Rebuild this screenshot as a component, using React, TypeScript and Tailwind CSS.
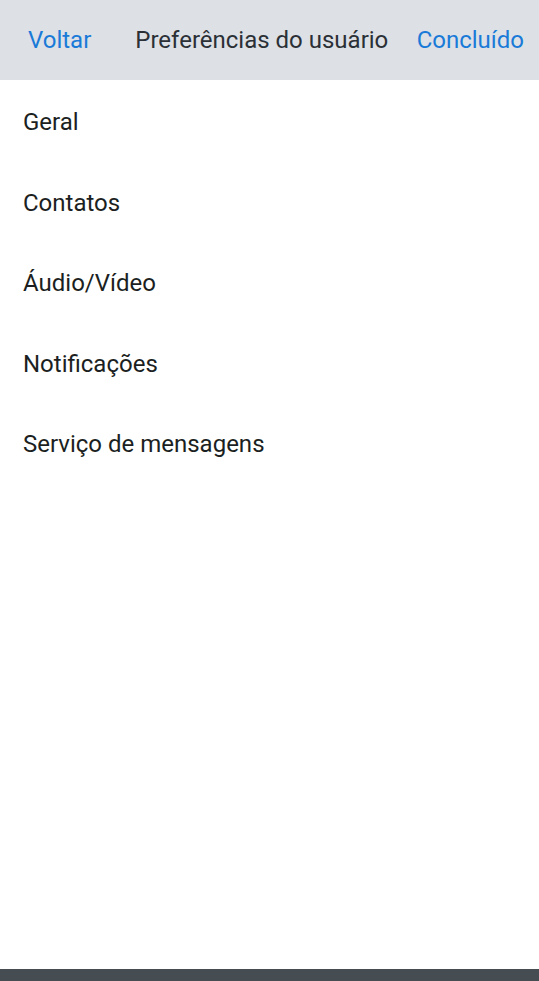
const items = ["Geral", "Contatos", "Áudio/Vídeo", "Notificações", "Serviço de mensagens"];

export default function App() {
  return (
    <div className="flex h-[981px] w-[539px] flex-col bg-white font-['Roboto',sans-serif]">
      <header className="flex h-20 shrink-0 items-center bg-[#dde1e6] pl-[28px] pr-[15px] text-[24px]">
        <span className="text-[#1a7ad8]">Voltar</span>
        <span className="ml-[44px] text-[#2b3036]">Preferências do usuário</span>
        <span className="ml-auto text-[#1a7ad8]">Concluído</span>
      </header>
      <ul className="flex-1 pt-[2px]">
        {items.map(label => (
          <li key={label} className="flex h-[80.5px] items-center pl-[23px] text-[24px] text-[#1c1f22]">
            {label}
          </li>
        ))}
      </ul>
      <div className="h-3 shrink-0 bg-[#454d53]" />
    </div>
  );
}
